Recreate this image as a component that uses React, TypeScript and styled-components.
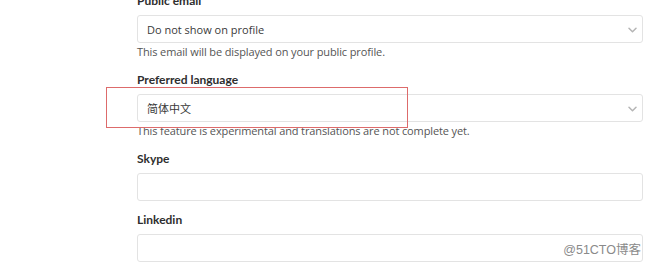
import { createGlobalStyle, styled } from "styled-components";

const GlobalStyle = createGlobalStyle`
  html, body {
    margin: 0;
    padding: 0;
    background: #ffffff;
    overflow: hidden;
  }
  body {
    font-family: "Open Sans", "Noto Sans", "Noto Sans CJK SC", sans-serif;
  }
`;

function Chevron() {
  return (
    <ChevronIcon width="9" height="6" viewBox="0 0 9 6">
      <path d="M1 1.2l3.5 3.5 3.5-3.5" fill="none" stroke="#b5b5b5" strokeWidth="1.5" strokeLinecap="round" strokeLinejoin="round" />
    </ChevronIcon>
  );
}

/**
 * 프로필 설정 폼 일부 (이메일 / 언어 / 연락처)
 */
export default function App() {
  return (
    <Page>
      <GlobalStyle />
      <Form>
        <FormGroup>
          <Label>Public email</Label>
          <Select>
            <span>Do not show on profile</span>
            <Chevron />
          </Select>
          <Help>This email will be displayed on your public profile.</Help>
        </FormGroup>

        <FormGroup>
          <Label>Preferred language</Label>
          <Highlighted>
            <Select>
              <span>简体中文</span>
              <Chevron />
            </Select>
            <Annotation />
          </Highlighted>
          <Help>This feature is experimental and translations are not complete yet.</Help>
        </FormGroup>

        <FormGroup>
          <Label>Skype</Label>
          <Input />
        </FormGroup>

        <FormGroup>
          <Label>Linkedin</Label>
          <Input />
        </FormGroup>
      </Form>
      <Watermark>@51CTO博客</Watermark>
    </Page>
  );
}

const Page = styled.div`
  position: relative;
  width: 650px;
  height: 270px;
  overflow: hidden;
`;

const Form = styled.div`
  margin-top: -7px;
  padding-left: 137px;
  width: 506px;
  display: flex;
  flex-direction: column;
`;

const FormGroup = styled.div`
  display: flex;
  flex-direction: column;
  margin-bottom: 11px;
`;

const Label = styled.label`
  font-family: Lato, "Open Sans", sans-serif;
  font-weight: 700;
  font-size: 12px;
  line-height: 16px;
  color: #2e2e2e;
  margin-bottom: 6px;
`;

const Select = styled.div`
  box-sizing: border-box;
  height: 28px;
  border: 1px solid #e3e3e3;
  border-radius: 3px;
  background: #ffffff;
  display: flex;
  align-items: center;
  justify-content: space-between;
  padding: 0 5px 0 9px;
  font-size: 11px;
  color: #3a3a3a;
`;

const ChevronIcon = styled.svg`
  display: block;
  margin-top: 2px;
`;

const Input = styled.div`
  box-sizing: border-box;
  height: 28px;
  border: 1px solid #e3e3e3;
  border-radius: 3px;
  background: #ffffff;
`;

const Help = styled.div`
  font-size: 11px;
  line-height: 18px;
  letter-spacing: -0.12px;
  color: #555555;
`;

const Highlighted = styled.div`
  position: relative;
`;

const Annotation = styled.div`
  position: absolute;
  left: -31px;
  top: -7px;
  width: 302px;
  height: 41px;
  box-sizing: border-box;
  border: 1.5px solid #dd6b6b;
  pointer-events: none;
`;

const Watermark = styled.div`
  position: absolute;
  right: 9px;
  bottom: 12px;
  font-family: "Liberation Sans", "Noto Sans CJK SC", sans-serif;
  font-size: 12.5px;
  color: #8a8a8a;
  text-shadow: 0 0 2px #ffffff;
`;
